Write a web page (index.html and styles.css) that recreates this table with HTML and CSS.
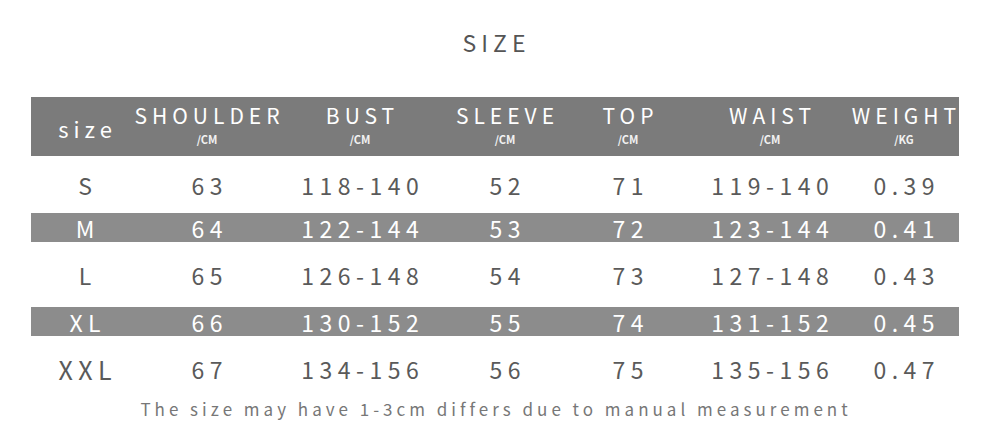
FILE: index.html
```html
<!DOCTYPE html>
<html>
<head>
<meta charset="utf-8">
<link rel="stylesheet" href="styles.css">
</head>
<body>
<div class="page">
  <h1 class="title">SIZE</h1>
  <div class="table">
    <div class="row head">
      <div class="cell"><span class="lbl small">size</span></div>
      <div class="cell"><span class="lbl">SHOULDER</span><span class="unit">/CM</span></div>
      <div class="cell"><span class="lbl">BUST</span><span class="unit">/CM</span></div>
      <div class="cell"><span class="lbl">SLEEVE</span><span class="unit">/CM</span></div>
      <div class="cell"><span class="lbl">TOP</span><span class="unit">/CM</span></div>
      <div class="cell"><span class="lbl">WAIST</span><span class="unit">/CM</span></div>
      <div class="cell"><span class="lbl">WEIGHT</span><span class="unit">/KG</span></div>
    </div>
    <div class="row plain first">
      <div class="cell">S</div><div class="cell">63</div><div class="cell">118-140</div><div class="cell">52</div><div class="cell">71</div><div class="cell">119-140</div><div class="cell">0.39</div>
    </div>
    <div class="row band">
      <div class="cell">M</div><div class="cell">64</div><div class="cell">122-144</div><div class="cell">53</div><div class="cell">72</div><div class="cell">123-144</div><div class="cell">0.41</div>
    </div>
    <div class="row plain mid">
      <div class="cell">L</div><div class="cell">65</div><div class="cell">126-148</div><div class="cell">54</div><div class="cell">73</div><div class="cell">127-148</div><div class="cell">0.43</div>
    </div>
    <div class="row band">
      <div class="cell">XL</div><div class="cell">66</div><div class="cell">130-152</div><div class="cell">55</div><div class="cell">74</div><div class="cell">131-152</div><div class="cell">0.45</div>
    </div>
    <div class="row plain last">
      <div class="cell">XXL</div><div class="cell">67</div><div class="cell">134-156</div><div class="cell">56</div><div class="cell">75</div><div class="cell">135-156</div><div class="cell">0.47</div>
    </div>
  </div>
  <p class="note">The size may have 1-3cm differs due to manual measurement</p>
</div>
</body>
</html>
```

FILE: styles.css
```css
html, body {
  margin: 0;
  padding: 0;
  background: #ffffff;
}
body {
  font-family: "Noto Sans CJK SC", "Noto Sans", sans-serif;
  color: #5a5a5a;
}
.page {
  width: 988px;
  height: 433px;
  overflow: hidden;
  padding-top: 25px;
  box-sizing: border-box;
}
.title {
  margin: 0;
  text-align: center;
  font-size: 23px;
  font-weight: 400;
  letter-spacing: 5px;
  padding-left: 5px;
  line-height: 34px;
  color: #555555;
}
.table {
  margin-top: 38px;
  margin-left: 31px;
  width: 928px;
}
.row {
  display: grid;
  grid-template-columns: 108px 136px 170px 120px 126px 158px 110px;
  align-items: center;
}
.cell {
  text-align: center;
  font-size: 23px;
  line-height: 28px;
  letter-spacing: 5.5px;
  padding-left: 5.5px;
  white-space: nowrap;
}
.head {
  background: #7b7b7b;
  height: 59px;
  color: #ffffff;
}
.head .cell {
  display: flex;
  flex-direction: column;
  align-items: center;
  padding-left: 0;
  letter-spacing: 0;
  line-height: normal;
}
.lbl {
  font-size: 21px;
  letter-spacing: 5px;
  padding-left: 5px;
  line-height: 26px;
  margin-top: -6px;
}
.lbl.small {
  font-size: 22px;
  margin-top: 2px;
}
.unit {
  font-size: 11px;
  font-weight: 700;
  line-height: 14px;
  margin-top: 4px;
  letter-spacing: 0;
  color: #f2f2f2;
}
.plain {
  color: #5a5a5a;
}
.first { height: 57px; }
.mid { height: 65px; }
.band {
  height: 29px;
  background: #8c8c8c;
  color: #ffffff;
}
.last {
  height: 62px;
  padding-top: 4px;
  box-sizing: border-box;
}
.last .cell:first-child {
  font-size: 25px;
}
.note {
  margin: 0;
  text-align: center;
  font-size: 17px;
  letter-spacing: 4px;
  padding-left: 4px;
  color: #777777;
  line-height: 22px;
}
```
